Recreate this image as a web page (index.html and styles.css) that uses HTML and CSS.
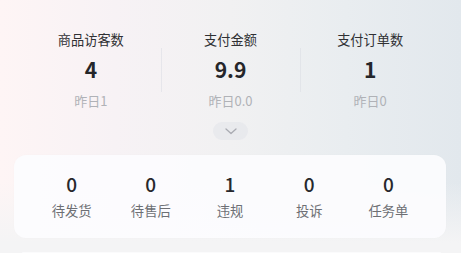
FILE: index.html
```html
<!DOCTYPE html>
<html lang="zh">
<head>
<meta charset="utf-8">
<link rel="stylesheet" href="styles.css">
</head>
<body>
<div class="page">
  <div class="stats">
    <div class="stat">
      <div class="stat-label">商品访客数</div>
      <div class="stat-value">4</div>
      <div class="stat-sub">昨日1</div>
    </div>
    <div class="stat divided">
      <div class="stat-label">支付金额</div>
      <div class="stat-value">9.9</div>
      <div class="stat-sub">昨日0.0</div>
    </div>
    <div class="stat divided">
      <div class="stat-label">支付订单数</div>
      <div class="stat-value">1</div>
      <div class="stat-sub">昨日0</div>
    </div>
  </div>
  <div class="toggle-row">
    <div class="toggle">
      <svg width="12" height="7" viewBox="0 0 12 7"><path d="M1 1l5 4.5L11 1" fill="none" stroke="#a9abb2" stroke-width="1.3" stroke-linecap="round" stroke-linejoin="round"/></svg>
    </div>
  </div>
  <div class="card">
    <div class="item"><div class="item-num">0</div><div class="item-label">待发货</div></div>
    <div class="item"><div class="item-num">0</div><div class="item-label">待售后</div></div>
    <div class="item"><div class="item-num">1</div><div class="item-label">违规</div></div>
    <div class="item"><div class="item-num">0</div><div class="item-label">投诉</div></div>
    <div class="item"><div class="item-num">0</div><div class="item-label">任务单</div></div>
  </div>
  <div class="next-card"></div>
</div>
</body>
</html>
```
FILE: styles.css
```css
* { box-sizing: border-box; }
html, body { margin: 0; padding: 0; }
body {
  font-family: "Noto Sans CJK SC", "Noto Sans", sans-serif;
  width: 461px;
  height: 253px;
  overflow: hidden;
}
.page {
  height: 253px;
  padding-top: 30px;
  display: flex;
  flex-direction: column;
  background:
    linear-gradient(to bottom, rgba(244,244,245,0) 0%, rgba(244,244,245,0) 72%, rgba(244,244,245,1) 96%),
    linear-gradient(90deg, #fef5f5 0%, #f7f2f5 25%, #f1f1f2 50%, #e9edf0 75%, #e2e8ed 100%);
}
.stats {
  display: grid;
  grid-template-columns: repeat(3, 1fr);
  margin: 0 21px;
}
.stat {
  position: relative;
  display: flex;
  flex-direction: column;
  align-items: center;
}
.stat.divided::before {
  content: "";
  position: absolute;
  left: 0;
  top: 18px;
  height: 44px;
  width: 1px;
  background: rgba(220, 222, 228, 0.6);
}
.stat-label {
  font-size: 13.2px;
  line-height: 20px;
  color: #2f3033;
}
.stat-value {
  margin-top: 4px;
  font-size: 21px;
  line-height: 30px;
  font-weight: 700;
  color: #25262a;
}
.stat-sub {
  margin-top: 6.5px;
  font-size: 13px;
  line-height: 20px;
  color: #b0b2b7;
}
.toggle-row {
  display: flex;
  justify-content: center;
  margin-top: 11.5px;
}
.toggle {
  width: 35px;
  height: 18px;
  border-radius: 9px;
  background: rgba(226, 227, 234, 0.55);
  display: flex;
  align-items: center;
  justify-content: center;
}
.card {
  margin: 15px 15px 0 14px;
  height: 83px;
  flex: none;
  border-radius: 12px;
  background: rgba(252, 252, 254, 0.92);
  display: grid;
  grid-template-columns: repeat(5, 1fr);
  align-content: start;
  padding: 17px 18px 0 18px;
  box-shadow: 0 0 2px rgba(0,0,0,0.02);
}
.item {
  display: flex;
  flex-direction: column;
  align-items: center;
}
.item-num {
  font-size: 19px;
  line-height: 24px;
  color: #27282c;
  font-weight: 500;
}
.item-label {
  margin-top: 4.5px;
  font-size: 13.3px;
  line-height: 20px;
  color: #6d6f74;
}
.next-card {
  margin: 14px 20px 0 22px;
  flex: 1;
  background: #fbfbfc;
  border-radius: 8px 8px 0 0;
}
```
